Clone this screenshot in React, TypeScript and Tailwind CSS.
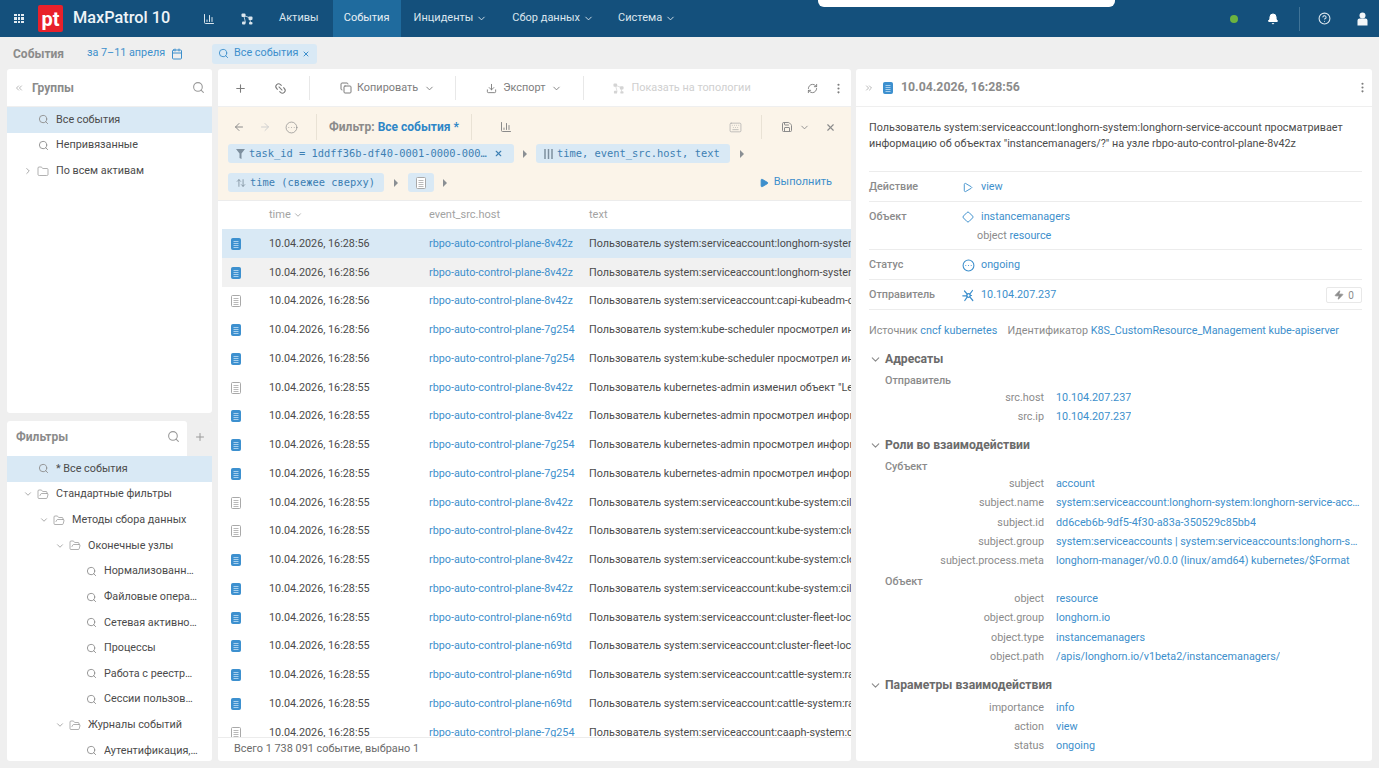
import {
  ArrowLeft,
  ArrowRight,
  ArrowUpDown,
  Bell,
  Calendar,
  ChartColumn,
  ChevronDown,
  ChevronRight,
  ChevronsLeft,
  ChevronsRight,
  CircleEllipsis,
  CircleHelp,
  Copy,
  Diamond,
  Download,
  EllipsisVertical,
  Folder,
  FolderOpen,
  Keyboard,
  Link2,
  Play,
  Plus,
  RefreshCw,
  Save,
  Search,
  X,
  Zap,
} from "lucide-react";
import type { ReactNode } from "react";

const mono = "font-['DejaVu_Sans_Mono','Liberation_Mono',monospace]";

function DocIcon({ blue }: { blue: boolean }) {
  return (
    <svg width="10" height="12" viewBox="0 0 10 12" className="shrink-0">
      <rect
        x="0.5"
        y="0.5"
        width="9"
        height="11"
        rx="1"
        fill={blue ? "#3d90cf" : "#fff"}
        stroke={blue ? "#3d90cf" : "#a9a9a9"}
      />
      <path
        d="M2.5 3.5h5M2.5 5.5h5M2.5 7.5h5M2.5 9.5h5"
        stroke={blue ? "#a8d0ee" : "#b9b9b9"}
        strokeWidth="1"
      />
    </svg>
  );
}

// four nodes joined in the middle, used for the topology buttons
function NodesIcon({ size, className }: { size: number; className?: string }) {
  return (
    <svg width={size} height={size} viewBox="0 0 12 12" fill="currentColor" className={`shrink-0 ${className ?? ""}`}>
      <rect x="0.5" y="0.5" width="4" height="3.5" rx="1" />
      <rect x="7.5" y="3.5" width="4" height="3.5" rx="1" />
      <rect x="1" y="8.5" width="3.5" height="3" rx="1" />
      <rect x="8" y="9" width="3.5" height="2.5" rx="1" />
      <path d="M3 3.5l1.5 6M4 3l4 1.5M9 6.5l.5 3" stroke="currentColor" strokeWidth="0.8" fill="none" />
    </svg>
  );
}

function SenderIcon() {
  return (
    <svg width="13" height="13" viewBox="0 0 13 13" fill="none" stroke="currentColor" strokeWidth="1.2" strokeLinecap="round">
      <circle cx="6.5" cy="6.5" r="1.8" />
      <path d="M5.2 5.2L2.5 2M7.8 5.2L10.5 1.5M5 6.8H0.8M5.3 7.8L2.8 11.5M7.8 7.8L10.8 11.5M8.3 6.5H9.5" />
    </svg>
  );
}

function Caret() {
  return <div className="h-0 w-0 border-y-[4px] border-l-[4px] border-y-transparent border-l-[#8a8f94]" />;
}

function NavItem({ label, menu }: { label: string; menu?: boolean }) {
  return (
    <div className="flex items-center gap-[3px] whitespace-nowrap text-[11px] text-[#dbe6ee]">
      {label}
      {menu && <ChevronDown size={11} />}
    </div>
  );
}

function Header() {
  return (
    <header className="relative flex h-[37px] shrink-0 items-center bg-[#14507c] text-white">
      <div className="absolute left-[818px] top-0 h-[7px] w-[297px] rounded-b-md bg-white" />
      <div className="ml-[14px] grid w-[10px] grid-cols-3 gap-[1px]">
        {Array.from({ length: 9 }).map((_, i) => (
          <div key={i} className="h-[2.5px] w-[2.5px] bg-[#e3ecf2]" />
        ))}
      </div>
      <div className="ml-[14px] flex h-[27px] w-[25px] items-center justify-center rounded-[2px] bg-[#e8212b] text-[20px] font-bold leading-none text-white">
        pt
      </div>
      <div className="ml-[10px] w-[130px] whitespace-nowrap text-[16.3px] font-medium text-[#eef4f8]">MaxPatrol 10</div>
      <ChartColumn size={12} className="text-[#dbe6ee]" />
      <NodesIcon size={12} className="ml-[26px] text-[#dbe6ee]" />
      <div className="ml-[26px]">
        <NavItem label="Активы" />
      </div>
      <div className="ml-[14px] flex h-full w-[68px] items-center justify-center bg-[#1f6b9e] text-[11px] text-[#e8f0f5]">
        События
      </div>
      <div className="ml-[13px]">
        <NavItem label="Инциденты" menu />
      </div>
      <div className="ml-[25px]">
        <NavItem label="Сбор данных" menu />
      </div>
      <div className="ml-[24px]">
        <NavItem label="Система" menu />
      </div>
      <div className="ml-auto flex items-center">
        <div className="h-[8px] w-[8px] rounded-full bg-[#6cb33f]" />
        <Bell size={12} fill="currentColor" className="ml-[29px]" />
        <div className="ml-[20px] h-[24px] w-px bg-[#3f7397]" />
        <CircleHelp size={13} className="ml-[18px] text-[#dbe6ee]" />
        <svg width="11" height="14" viewBox="0 0 11 14" className="ml-[26px] mr-[11px]">
          <circle cx="5.5" cy="3.5" r="3" fill="#f2f6f9" />
          <path d="M0.5 13.5V8.5a2 2 0 0 1 2-2h6a2 2 0 0 1 2 2v5z" fill="#f2f6f9" />
        </svg>
      </div>
    </header>
  );
}

function SubHeader() {
  return (
    <div className="flex h-[32px] shrink-0 items-center pl-[13px] pt-[1px] text-[10.8px]">
      <span className="w-[74px] text-[12px] font-bold text-[#8b8b8b]">События</span>
      <span className="whitespace-nowrap text-[#3d8fcc]">за 7–11 апреля</span>
      <Calendar size={12} className="ml-[6px] text-[#3d8fcc]" />
      <div className="ml-[29px] flex h-[20px] w-[105px] items-center gap-[5px] whitespace-nowrap rounded-[3px] bg-[#d9e9f5] pl-[6px] text-[#3d8fcc]">
        <Search size={11} className="shrink-0" />
        Все события
        <X size={8} strokeWidth={3} className="-ml-[1px] shrink-0" />
      </div>
    </div>
  );
}

interface TreeRowProps {
  depth: number;
  label: string;
  kind: "search" | "open" | "closed";
  active?: boolean;
}

function TreeRow({ depth, label, kind, active }: TreeRowProps) {
  const left = 16 * depth;
  return (
    <div
      className={`flex h-[25.65px] shrink-0 items-center text-[10.8px] ${active ? "bg-[#d9e9f5]" : ""}`}
      style={{ paddingLeft: left + 15 }}
    >
      <div className="flex w-[12px] shrink-0 justify-center text-[#9a9a9a]">
        {kind === "open" && <ChevronDown size={10} />}
        {kind === "closed" && <ChevronRight size={10} />}
      </div>
      <div className="ml-[3px] flex w-[12px] shrink-0 justify-center text-[#8f8f8f]">
        {kind === "search" && <Search size={11} />}
        {kind === "open" && <FolderOpen size={13} strokeWidth={1.4} />}
        {kind === "closed" && <Folder size={13} strokeWidth={1.4} />}
      </div>
      <span className="ml-[7px] truncate pr-[14px] text-[#4b4b4b]">{label}</span>
    </div>
  );
}

function LeftColumn() {
  return (
    <aside className="flex w-[205px] shrink-0 flex-col gap-[8px]">
      <section className="flex h-[344px] flex-col rounded-[3px] bg-white">
        <div className="flex h-[38px] shrink-0 items-center border-b border-[#efefef] pl-[7px] pr-[7px]">
          <ChevronsLeft size={10} className="text-[#a9a9a9]" />
          <span className="ml-[8px] text-[12px] font-bold text-[#8b8b8b]">Группы</span>
          <Search size={13} className="ml-auto text-[#9a9a9a]" />
        </div>
        <TreeRow depth={0} label="Все события" kind="search" active />
        <TreeRow depth={0} label="Непривязанные" kind="search" />
        <TreeRow depth={0} label="По всем активам" kind="closed" />
      </section>
      <section className="flex min-h-0 flex-1 flex-col overflow-hidden rounded-[3px] bg-white">
        <div className="flex h-[35px] shrink-0 bg-[#efefef]">
          <div className="flex flex-1 items-center rounded-t-[3px] bg-white pb-[4px] pl-[9px] pr-[7px]">
            <span className="text-[12px] font-bold text-[#8b8b8b]">Фильтры</span>
            <Search size={13} className="ml-auto text-[#9a9a9a]" />
          </div>
          <div className="flex w-[25px] items-center justify-center pb-[4px] text-[#9a9a9a]">
            <Plus size={12} />
          </div>
        </div>
        <TreeRow depth={0} label="* Все события" kind="search" active />
        <TreeRow depth={0} label="Стандартные фильтры" kind="open" />
        <TreeRow depth={1} label="Методы сбора данных" kind="open" />
        <TreeRow depth={2} label="Оконечные узлы" kind="open" />
        <TreeRow depth={3} label="Нормализованные события" kind="search" />
        <TreeRow depth={3} label="Файловые операции" kind="search" />
        <TreeRow depth={3} label="Сетевая активность" kind="search" />
        <TreeRow depth={3} label="Процессы" kind="search" />
        <TreeRow depth={3} label="Работа с реестром" kind="search" />
        <TreeRow depth={3} label="Сессии пользователей" kind="search" />
        <TreeRow depth={2} label="Журналы событий" kind="open" />
        <TreeRow depth={3} label="Аутентификация, авторизация" kind="search" />
      </section>
    </aside>
  );
}

function Chip({ children, className }: { children: ReactNode; className: string }) {
  return (
    <div className={`flex h-[19px] items-center whitespace-nowrap rounded-[3px] bg-[#d9e9f5] text-[10.4px] text-[#3d7fb3] ${mono} ${className}`}>
      {children}
    </div>
  );
}

function Toolbar() {
  return (
    <div className="flex h-[38px] shrink-0 items-center whitespace-nowrap border-b border-[#efefef] pt-[1px] text-[10.9px] text-[#7d7d7d]">
      <Plus size={13} className="ml-[16px]" />
      <Link2 size={13} className="ml-[27px] rotate-45" />
      <div className="ml-[22px] h-[24px] w-px bg-[#e8e8e8]" />
      <Copy size={12} className="ml-[30px]" />
      <span className="ml-[5px]">Копировать</span>
      <ChevronDown size={11} className="ml-[6px]" />
      <div className="ml-[20px] h-[24px] w-px bg-[#e8e8e8]" />
      <Download size={11} className="ml-[30px]" />
      <span className="ml-[6px]">Экспорт</span>
      <ChevronDown size={11} className="ml-[6px]" />
      <div className="ml-[21px] h-[24px] w-px bg-[#e8e8e8]" />
      <NodesIcon size={11} className="ml-[29px] text-[#d4d4d4]" />
      <span className="ml-[7px] text-[#cfcfcf]">Показать на топологии</span>
      <RefreshCw size={11} className="ml-auto" />
      <EllipsisVertical size={13} className="ml-[14px] mr-[6px]" />
    </div>
  );
}

function FilterPanel() {
  return (
    <div className="flex h-[94px] shrink-0 flex-col border-b border-[#ececec] bg-[#fbf4e9] pl-[10px] pr-[15px]">
      <div className="flex h-[37px] shrink-0 items-center pt-[3px] text-[12px] text-[#8b8b8b]">
        <ArrowLeft size={12} className="ml-[5px]" />
        <ArrowRight size={12} className="ml-[14px] text-[#cfcfcf]" />
        <CircleEllipsis size={13} strokeWidth={1.3} className="ml-[14px]" />
        <div className="ml-[18px] h-[26px] w-px bg-[#e9e2d5]" />
        <span className="ml-[12px] font-bold">Фильтр:</span>
        <span className="ml-[3px] font-bold text-[#2e86c7]">Все события *</span>
        <div className="ml-[12px] h-[26px] w-px bg-[#e9e2d5]" />
        <ChartColumn size={12} className="ml-[28px]" />
        <Keyboard size={13} strokeWidth={1.3} className="ml-auto text-[#a9a9a9]" />
        <div className="ml-[19px] h-[24px] w-px bg-[#e9e2d5]" />
        <Save size={12} className="ml-[19px]" />
        <ChevronDown size={11} className="ml-[6px]" />
        <X size={11} strokeWidth={2.5} className="ml-[15px]" />
      </div>
      <div className="flex items-center">
        <Chip className="w-[286px] pl-[8px]">
          <svg width="9" height="10" viewBox="0 0 9 10" className="shrink-0">
            <path d="M0 0h9L5.5 4.5V10l-2-1V4.5z" fill="#7d8f9e" />
          </svg>
          <span className="ml-[4px] truncate">task_id = 1ddff36b-df40-0001-0000-000…</span>
          <X size={9} strokeWidth={3} className="ml-[7px] mr-[8px] shrink-0" />
        </Chip>
        <div className="ml-[9px]">
          <Caret />
        </div>
        <Chip className="ml-[9px] w-[194px] pl-[8px]">
          <svg width="9" height="10" viewBox="0 0 9 10" className="shrink-0">
            <path d="M1 0v10M4.5 0v10M8 0v10" stroke="#7d8f9e" strokeWidth="1.5" />
          </svg>
          <span className="ml-[4px]">time, event_src.host, text</span>
        </Chip>
        <div className="ml-[10px]">
          <Caret />
        </div>
      </div>
      <div className="mt-[10px] flex items-center">
        <Chip className="w-[156px] pl-[8px]">
          <ArrowUpDown size={10} className="shrink-0 text-[#7d8f9e]" />
          <span className="ml-[4px]">time (свежее сверху)</span>
        </Chip>
        <div className="ml-[10px]">
          <Caret />
        </div>
        <Chip className="ml-[10px] w-[26px] justify-center">
          <DocIcon blue={false} />
        </Chip>
        <div className="ml-[9px]">
          <Caret />
        </div>
        <div className="ml-auto mr-[4px] flex items-center gap-[5px] text-[11px] text-[#3d8fcc]">
          <Play size={10} fill="currentColor" />
          Выполнить
        </div>
      </div>
    </div>
  );
}

const hosts = { a: "rbpo-auto-control-plane-8v42z", b: "rbpo-auto-control-plane-7g254", c: "rbpo-auto-control-plane-n69td" };
const sa = "Пользователь system:serviceaccount:";

const rows = [
  { s: "56", h: hosts.a, t: sa + "longhorn-system:longhorn-service-account", b: true },
  { s: "56", h: hosts.a, t: sa + "longhorn-system:longhorn-service-account", b: true },
  { s: "56", h: hosts.a, t: sa + "capi-kubeadm-control-plane", b: false },
  { s: "56", h: hosts.b, t: "Пользователь system:kube-scheduler просмотрел информацию", b: true },
  { s: "56", h: hosts.b, t: "Пользователь system:kube-scheduler просмотрел информацию", b: true },
  { s: "55", h: hosts.a, t: 'Пользователь kubernetes-admin изменил объект "Lease"', b: false },
  { s: "55", h: hosts.a, t: "Пользователь kubernetes-admin просмотрел информацию", b: true },
  { s: "55", h: hosts.b, t: "Пользователь kubernetes-admin просмотрел информацию", b: true },
  { s: "55", h: hosts.b, t: "Пользователь kubernetes-admin просмотрел информацию", b: true },
  { s: "55", h: hosts.a, t: sa + "kube-system:cilium-operator", b: false },
  { s: "55", h: hosts.a, t: sa + "kube-system:cloud-controller", b: false },
  { s: "55", h: hosts.a, t: sa + "kube-system:cloud-controller", b: true },
  { s: "55", h: hosts.a, t: sa + "kube-system:cilium-operator", b: true },
  { s: "55", h: hosts.c, t: sa + "cluster-fleet-local-system", b: true },
  { s: "55", h: hosts.c, t: sa + "cluster-fleet-local-system", b: true },
  { s: "55", h: hosts.c, t: sa + "cattle-system:rancher", b: true },
  { s: "55", h: hosts.c, t: sa + "cattle-system:rancher", b: true },
  { s: "55", h: hosts.b, t: sa + "caaph-system:caaph-controller", b: false },
];

function EventsTable() {
  return (
    <div className="flex min-h-0 flex-1 flex-col">
      <div className="flex h-[28px] shrink-0 items-center pl-[51px] text-[11px] text-[#a3a3a3]">
        <div className="flex w-[160px] items-center gap-[2px]">
          time <ChevronDown size={10} />
        </div>
        <div className="w-[160px]">event_src.host</div>
        <div>text</div>
      </div>
      <div className="ml-[4px] min-h-0 flex-1 overflow-hidden">
        {rows.map((r, i) => (
          <div
            key={i}
            className={`flex h-[28.75px] items-center whitespace-nowrap pt-[1px] text-[10.8px] ${
              i === 0 ? "bg-[#d9e9f5]" : i === 1 ? "bg-[#f1f1f1]" : ""
            }`}
          >
            <div className="flex w-[47px] shrink-0 pl-[9px]">
              <DocIcon blue={r.b} />
            </div>
            <div className="w-[160px] shrink-0 text-[#4b4b4b]">10.04.2026, 16:28:{r.s}</div>
            <div className="w-[160px] shrink-0 text-[#3d8fcc]">{r.h}</div>
            <div className="text-[#4b4b4b]">{r.t}</div>
          </div>
        ))}
      </div>
      <div className="flex h-[24px] shrink-0 items-center border-t border-[#ececec] pl-[16px] text-[10.9px] text-[#6b6b6b]">
        Всего 1 738 091 событие, выбрано 1
      </div>
    </div>
  );
}

function CenterColumn() {
  return (
    <main className="ml-[6px] mr-[5px] flex w-[633px] shrink-0 flex-col overflow-hidden rounded-[3px] bg-white">
      <Toolbar />
      <FilterPanel />
      <EventsTable />
    </main>
  );
}

function SummaryRow({ label, icon, value, tall, extra }: { label: string; icon: ReactNode; value: string; tall?: boolean; extra?: ReactNode }) {
  return (
    <div className={`border-b border-[#ececec] ${tall ? "h-[48px]" : "h-[30px]"}`}>
      <div className="flex h-[29px] items-center pt-[1px] text-[10.8px]">
        <span className="w-[93px] font-medium text-[#8b8b8b]">{label}</span>
        <div className="flex w-[19px] justify-start text-[#3d8fcc]">{icon}</div>
        <span className="text-[#3d8fcc]">{value}</span>
        {extra}
      </div>
      {tall && (
        <div className="-mt-[3px] pl-[108px] text-[10.8px] text-[#8b8b8b]">
          object <span className="text-[#3d8fcc]">resource</span>
        </div>
      )}
    </div>
  );
}

function Section({ title }: { title: string }) {
  return (
    <div className="flex h-[26px] items-center pt-[1px] text-[12.2px] font-bold text-[#6b6b6b]">
      <ChevronDown size={13} className="mr-[3px] text-[#8b8b8b]" />
      <span>{title}</span>
    </div>
  );
}

function SubTitle({ title }: { title: string }) {
  return <div className="flex h-[16px] items-center pl-[16px] pt-[3px] text-[10.8px] font-medium text-[#8b8b8b]">{title}</div>;
}

function Prop({ name, value }: { name: string; value: string }) {
  return (
    <div className="flex h-[19.3px] items-center pt-[1px] text-[10.8px]">
      <div className="w-[187px] shrink-0 pr-[12px] text-right text-[#8b8b8b]">{name}</div>
      <div className="truncate text-[#3d8fcc]">{value}</div>
    </div>
  );
}

function DetailColumn() {
  return (
    <section className="flex min-w-0 flex-1 flex-col overflow-hidden rounded-[3px] bg-white">
      <div className="flex h-[38px] shrink-0 items-center border-b border-[#efefef] pl-[8px] pr-[3px]">
        <ChevronsRight size={10} className="text-[#a9a9a9]" />
        <div className="ml-[9px]">
          <DocIcon blue />
        </div>
        <span className="ml-[8px] text-[12.3px] font-bold text-[#8b8b8b]">10.04.2026, 16:28:56</span>
        <EllipsisVertical size={13} className="ml-auto text-[#7d7d7d]" />
      </div>
      <div className="min-h-0 flex-1 overflow-hidden pl-[13px] pr-[10px]">
        <p className="whitespace-nowrap pt-[13px] text-[10.8px] leading-[16px] text-[#4b4b4b]">
          Пользователь system:serviceaccount:longhorn-system:longhorn-service-account просматривает
          <br />
          информацию об объектах "instancemanagers/?" на узле rbpo-auto-control-plane-8v42z
        </p>
        <div className="mt-[19px] border-t border-[#ececec]">
          <SummaryRow label="Действие" icon={<Play size={11} />} value="view" />
          <SummaryRow label="Объект" icon={<Diamond size={12} />} value="instancemanagers" tall />
          <SummaryRow label="Статус" icon={<CircleEllipsis size={13} />} value="ongoing" />
          <SummaryRow
            label="Отправитель"
            icon={<SenderIcon />}
            value="10.104.207.237"
            extra={
              <div className="ml-auto flex h-[16px] w-[36px] items-center justify-center gap-[4px] rounded-[2px] border border-[#e8e8e8] text-[10px] text-[#8b8b8b]">
                <Zap size={10} fill="currentColor" />0
              </div>
            }
          />
        </div>
        <div className="flex h-[36px] items-center gap-[10px] whitespace-nowrap pt-[7px] text-[10.8px] text-[#8b8b8b]">
          <span>
            Источник <span className="text-[#3d8fcc]">cncf kubernetes</span>
          </span>
          <span>
            Идентификатор <span className="text-[#3d8fcc]">K8S_CustomResource_Management kube-apiserver</span>
          </span>
        </div>
        <Section title="Адресаты" />
        <SubTitle title="Отправитель" />
        <Prop name="src.host" value="10.104.207.237" />
        <Prop name="src.ip" value="10.104.207.237" />
        <div className="mt-[5.4px]">
          <Section title="Роли во взаимодействии" />
        </div>
        <SubTitle title="Субъект" />
        <Prop name="subject" value="account" />
        <Prop name="subject.name" value="system:serviceaccount:longhorn-system:longhorn-service-account" />
        <Prop name="subject.id" value="dd6ceb6b-9df5-4f30-a83a-350529c85bb4" />
        <Prop name="subject.group" value="system:serviceaccounts | system:serviceaccounts:longhorn-system" />
        <Prop name="subject.process.meta" value="longhorn-manager/v0.0.0 (linux/amd64) kubernetes/$Format" />
        <div className="mt-[2.5px]">
          <SubTitle title="Объект" />
        </div>
        <Prop name="object" value="resource" />
        <Prop name="object.group" value="longhorn.io" />
        <Prop name="object.type" value="instancemanagers" />
        <Prop name="object.path" value="/apis/longhorn.io/v1beta2/instancemanagers/" />
        <div className="mt-[5.5px]">
          <Section title="Параметры взаимодействия" />
        </div>
        <Prop name="importance" value="info" />
        <Prop name="action" value="view" />
        <Prop name="status" value="ongoing" />
      </div>
    </section>
  );
}

export default function App() {
  return (
    <div className="flex h-[768px] w-[1379px] flex-col overflow-hidden bg-[#efefef] font-['Roboto',sans-serif]">
      <Header />
      <SubHeader />
      <div className="flex min-h-0 flex-1 pb-[7px] pl-[7px] pr-[7px]">
        <LeftColumn />
        <CenterColumn />
        <DetailColumn />
      </div>
    </div>
  );
}
